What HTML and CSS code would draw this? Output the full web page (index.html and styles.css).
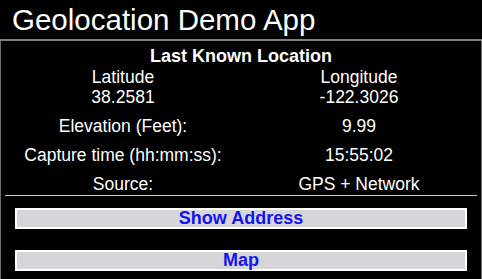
FILE: index.html
```html
<!DOCTYPE html>
<html lang="en">

<head>
  <meta charset="UTF-8">
  <meta name="viewport" content="width=device-width, initial-scale=1.0">
  <title>Geolocation Demo App</title>
  <link rel="stylesheet" href="styles.css">
</head>

<body>
  <header class="app-bar">Geolocation Demo App</header>
  <div class="panel">
    <div class="info">
      <h2 class="info-title">Last Known Location</h2>
      <div class="row row-head"><span>Latitude</span><span>Longitude</span></div>
      <div class="row row-head"><span>38.2581</span><span>-122.3026</span></div>
      <div class="row"><span>Elevation (Feet):</span><span>9.99</span></div>
      <div class="row"><span>Capture time (hh:mm:ss):</span><span>15:55:02</span></div>
      <div class="row"><span>Source:</span><span>GPS + Network</span></div>
    </div>
    <button class="btn">Show Address</button>
    <button class="btn btn-map">Map</button>
  </div>
</body>

</html>
```

FILE: styles.css
```css
* {
  margin: 0;
  padding: 0;
  box-sizing: border-box;
}

body {
  background-color: #000;
  color: #fff;
  font-family: "Liberation Sans", Arial, sans-serif;
}

.app-bar {
  height: 41px;
  line-height: 39px;
  padding-left: 12px;
  font-size: 29.5px;
  border-bottom: 2px solid #808080;
}

.panel {
  min-height: calc(100vh - 41px);
  padding-top: 4px;
  border-left: 1px solid #6e6e6e;
  border-right: 1px solid #6e6e6e;
}

.info {
  margin: 0 4px;
  padding-bottom: 1px;
  border-bottom: 1px solid #c8c8c8;
}

.info-title {
  font-size: 18px;
  font-weight: bold;
  line-height: 22px;
  text-align: center;
}

.row {
  display: grid;
  grid-template-columns: 1fr 1fr;
  margin-top: 9px;
  font-size: 17.5px;
  line-height: 20px;
  text-align: center;
}

.row-head {
  margin-top: 0;
}

.btn {
  display: block;
  width: calc(100% - 28px);
  height: 21px;
  margin: 12px auto 0;
  border: 2px solid #fff;
  background-color: #d5d5da;
  color: #1414f0;
  font-family: "Liberation Sans", Arial, sans-serif;
  font-size: 18px;
  font-weight: bold;
  line-height: 17px;
}

.btn-map {
  margin-top: 21px;
}
```
